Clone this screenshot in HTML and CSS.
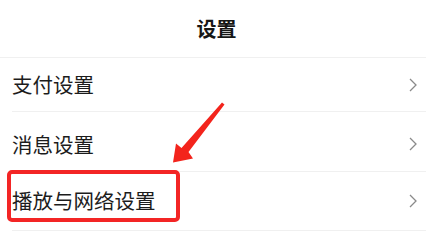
FILE: index.html
```html
<!DOCTYPE html>
<html lang="zh">
<head>
<meta charset="utf-8">
<link rel="stylesheet" href="styles.css">
</head>
<body>
<div class="page">
  <header class="header"><h1 class="title">设置</h1></header>
  <ul class="list">
    <li class="row row-1"><span class="label">支付设置</span><svg class="chev" viewBox="0 0 8 14"><path d="M1 1 L7 7 L1 13" /></svg></li>
    <li class="row row-2"><span class="label">消息设置</span><svg class="chev" viewBox="0 0 8 14"><path d="M1 1 L7 7 L1 13" /></svg></li>
    <li class="row row-3"><span class="label">播放与网络设置</span><svg class="chev" viewBox="0 0 8 14"><path d="M1 1 L7 7 L1 13" /></svg></li>
  </ul>
  <div class="highlight"></div>
  <svg class="arrow" viewBox="0 0 426 248"><path d="M222 102.5 L224.5 104.5 L188.5 152 L193 158.5 L173 162.5 L176 143.5 L181.5 148 Z"/></svg>
</div>
</body>
</html>
```
FILE: styles.css
```css
html, body {
  margin: 0;
  padding: 0;
  background: #ffffff;
}
.page {
  position: relative;
  width: 426px;
  height: 248px;
  overflow: hidden;
  font-family: "Noto Sans CJK SC", "Noto Sans", sans-serif;
  color: #1c1c1c;
}
.header {
  height: 57px;
  border-bottom: 1px solid #f0f0f0;
  display: flex;
  align-items: center;
  justify-content: center;
}
.title {
  margin: 0;
  padding-left: 7px;
  font-size: 20px;
  font-weight: 700;
  line-height: 1;
  color: #161616;
}
.list {
  list-style: none;
  margin: 0;
  padding: 0;
}
.row {
  display: flex;
  align-items: center;
  justify-content: space-between;
  margin-left: 12px;
  padding-right: 9px;
  border-bottom: 1px solid #f0f0f0;
  box-sizing: border-box;
}
.row-1 { height: 54px; }
.row-2 { height: 60px; padding-top: 5px; }
.row-3 { height: 59px; padding-bottom: 1px; }
.label {
  font-size: 20.5px;
  line-height: 1;
  letter-spacing: 0;
}
.chev {
  width: 8px;
  height: 14px;
  fill: none;
  stroke: #8a8a8a;
  stroke-width: 1.3;
}
.highlight {
  position: absolute;
  left: 7px;
  top: 170px;
  width: 173px;
  height: 52px;
  box-sizing: border-box;
  border: 4px solid #f32525;
  border-radius: 5px;
}
.arrow {
  position: absolute;
  left: 0;
  top: 0;
  width: 426px;
  height: 248px;
  fill: #f3241c;
}
```
